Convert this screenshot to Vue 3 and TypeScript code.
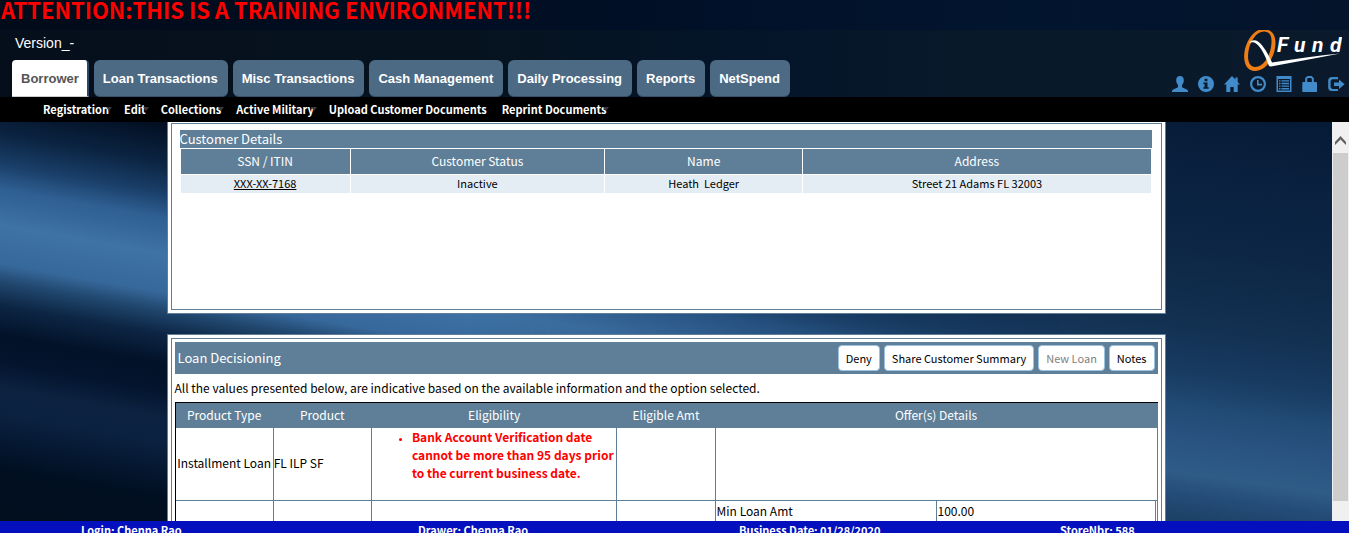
<script setup lang="ts">
interface Tab { label: string; active?: boolean }
interface MenuItem { label: string; arrow: boolean }
interface Action { label: string; disabled?: boolean }

const tabs: Tab[] = [
  { label: 'Borrower', active: true },
  { label: 'Loan Transactions' },
  { label: 'Misc Transactions' },
  { label: 'Cash Management' },
  { label: 'Daily Processing' },
  { label: 'Reports' },
  { label: 'NetSpend' },
]

const menu: MenuItem[] = [
  { label: 'Registration', arrow: true },
  { label: 'Edit', arrow: true },
  { label: 'Collections', arrow: true },
  { label: 'Active Military', arrow: true },
  { label: 'Upload Customer Documents', arrow: false },
  { label: 'Reprint Documents', arrow: true },
]

const actions: Action[] = [
  { label: 'Deny' },
  { label: 'Share Customer Summary' },
  { label: 'New Loan', disabled: true },
  { label: 'Notes' },
]

const icons: { name: string; path: string }[] = [
  { name: 'Profile', path: 'M8 0C5.3 0 4.2 1.8 4.2 4.2c0 2 .8 3.6 1.8 4.8v1.4c0 .8-.6 1.2-1.6 1.6L1.2 13.4C.3 13.800 0 14.500 0 16h16c0-1.500-.3-2.200-1.200-2.600L11.600 12c-1-.4-1.600-.8-1.600-1.600V9c1-1.200 1.800-2.800 1.800-4.800C11.800 1.800 10.700 0 8 0z' },
  { name: 'Information', path: 'M8 0a8 8 0 1 0 0 16A8 8 0 0 0 8 0zM6.600 2.800h2.800v2.400H6.600zM5.300 6.400h4.200v4.800h1.200v1.600H5.300v-1.600h1.200V8H5.300z' },
  { name: 'Home', path: 'M8 0L0 8.600h2.300V16h4v-5h3.400v5h4V8.600H16l-2.300-2.500V1.500h-2.300v2.100z' },
  { name: 'History', path: 'M8 0a8 8 0 1 0 0 16A8 8 0 0 0 8 0zm0 2.200a5.800 5.800 0 1 1 0 11.600A5.800 5.800 0 0 1 8 2.200zM7 4h1.600v3.800H12v1.600H7z' },
  { name: 'Reports list', path: 'M.5 0h15v16H.500zM2 3v11.500h12V3zM3 4.200h1.500v1.400H3zm2.500 0H13v1.400H5.500zM3 6.800h1.500v1.400H3zm2.500 0H13v1.400H5.500zM3 9.400h1.500v1.400H3zm2.500 0H13v1.400H5.500zM3 12h1.500v1.400H3zm2.500 0H13v1.400H5.500z' },
  { name: 'Lock', path: 'M5.500 0h4L11.800 2v4H14.500l.5 1v8.500l-.5.500H.800L.300 15.500V7l.5-1h2.400V2zM6 2L5.200 2.800V6h4.600V2.800L9 2z' },
  { name: 'Log out', path: 'M4 1h6v2.300H4.200L2.600 4.800v6.600l1.600 1.500H10V15H4C1.600 15 .2 13.600.2 11.400V4.800C.2 2.500 1.600 1 4 1zM11 3.400L16.600 8.200 11 13V10H6V6.400h5z' },
]

const customerHeads = ['SSN / ITIN', 'Customer Status', 'Name', 'Address']
const footer = ['Login: Chenna Rao', 'Drawer: Chenna Rao', 'Business Date: 01/28/2020', 'StoreNbr: 588']
</script>

<template>
  <div class="app">
    <header>
      <h1 class="banner">ATTENTION:THIS IS A TRAINING ENVIRONMENT!!!</h1>
      <div class="masthead">
        <div class="left">
          <div class="version">Version_-</div>
          <nav class="tabs">
            <a v-for="t in tabs" :key="t.label" href="#" class="tab" :class="{ active: t.active }">{{ t.label }}</a>
          </nav>
        </div>
        <div class="right">
          <svg class="logo" viewBox="0 0 98 41" role="img" aria-label="QFund">
            <path fill="#ee7d16" fill-rule="evenodd" d="M19 -1C29 -1 33 7 31 18C29 31 20 41 11 41C2 41 -1 31 0.500 22C2 11 10 -1 19 -1ZM20 1.500C12 1.500 6 12 4.500 21C3 30 5 37 11.500 37C19 37 25.500 27 27 17C28.500 8 27 1.500 20 1.500Z" />
            <path fill="#fff" d="M5 13C7 10 11 9.500 14 11.500C20 16 24 24 28 32.500C50 29 74 25.500 96 23.500C74 28 50 32 27 36.500L25 36C21 25 17 17 12 13.500C10 12 7 12 5 13Z" />
            <text x="33 50 68 86" y="22">Fund</text>
          </svg>
          <div class="icons">
            <a v-for="i in icons" :key="i.name" href="#" :aria-label="i.name">
              <svg viewBox="0 0 16 16"><path fill-rule="evenodd" :d="i.path" /></svg>
            </a>
          </div>
        </div>
      </div>
      <nav class="menu">
        <a v-for="m in menu" :key="m.label" href="#" :class="{ arrow: m.arrow }">{{ m.label }}</a>
      </nav>
    </header>

    <main>
      <div class="content">
        <section class="panel first">
          <div class="inner customer">
            <h2 class="strip">Customer Details</h2>
            <table class="customers">
              <colgroup><col class="c1" /><col class="c2" /><col class="c3" /><col class="c4" /></colgroup>
              <thead>
                <tr><th v-for="h in customerHeads" :key="h">{{ h }}</th></tr>
              </thead>
              <tbody>
                <tr>
                  <td><a href="#">XXX-XX-7168</a></td>
                  <td>Inactive</td>
                  <td>Heath&nbsp; Ledger</td>
                  <td>Street 21 Adams FL 32003</td>
                </tr>
              </tbody>
            </table>
          </div>
        </section>

        <section class="panel">
          <div class="inner loan">
            <div class="loan-head">
              <h2>Loan Decisioning</h2>
              <button v-for="a in actions" :key="a.label" type="button" :disabled="a.disabled">{{ a.label }}</button>
            </div>
            <p class="note">All the values presented below, are indicative based on the available information and the option selected.</p>
            <table class="offers">
              <colgroup><col class="o1" /><col class="o1" /><col class="o3" /><col class="o1" /><col class="o5" /><col class="o5" /></colgroup>
              <thead>
                <tr>
                  <th>Product Type</th><th>Product</th><th>Eligibility</th><th>Eligible Amt</th><th colspan="2">Offer(s) Details</th>
                </tr>
              </thead>
              <tbody>
                <tr>
                  <td class="mid">Installment Loan</td>
                  <td>FL ILP SF</td>
                  <td>
                    <ul><li>Bank Account Verification date cannot be more than 95 days prior to the current business date.</li></ul>
                  </td>
                  <td></td>
                  <td colspan="2"></td>
                </tr>
                <tr class="detail">
                  <td></td><td></td><td></td><td></td>
                  <td>Min Loan Amt</td>
                  <td class="amount">100.00</td>
                </tr>
              </tbody>
            </table>
          </div>
        </section>
      </div>

      <div class="scrollbar">
        <button type="button" aria-label="Scroll up">
          <svg viewBox="0 0 11 9"><path d="M0 6L5.500 0L11 6V9L5.500 3.500L0 9Z" fill="#606060" /></svg>
        </button>
        <div class="thumb"></div>
      </div>
    </main>

    <footer>
      <span v-for="f in footer" :key="f">{{ f }}</span>
    </footer>
  </div>
</template>

<style>
html, body { height: 100%; overflow: hidden; }
</style>

<style scoped>
* { box-sizing: border-box; }
h1, h2, p, ul { margin: 0; font-weight: 400; }
a { color: inherit; text-decoration: none; }
button { font-family: inherit; }

.app {
  display: grid;
  grid-template-rows: auto minmax(0, 1fr) auto;
  height: 100vh;
  overflow: hidden;
  font-family: "Noto Sans CJK SC", "Noto Sans", sans-serif;
  font-size: 12px;
  line-height: 18px;
  color: #000;
}

header { background: linear-gradient(90deg, #020b19, #010e24 40%, #02152f 75%, #03142b); }
.banner {
  padding: 0 0 12px 1px;
  font-size: 22px;
  line-height: 18px;
  font-weight: 700;
  color: #f00;
}
.masthead {
  display: flex;
  justify-content: space-between;
  background: linear-gradient(90deg, #050f1b, #06131f 35%, #04152a 56%, #08192a 72%, #0a1a2c);
}
.left { padding: 4px 0 0 12px; font-family: "Liberation Sans", Arial, sans-serif; }
.version { padding-left: 3px; font-size: 14px; color: #fff; }
.tabs { display: flex; gap: 5px; margin-top: 8px; }
.tab {
  padding: 1px 10px 0 9px;
  font-size: 13px;
  line-height: 35px;
  font-weight: 700;
  color: #fff;
  background: #4c6a83;
  border-bottom: 1px solid #34516b;
  border-radius: 6px;
}
.tab.active {
  padding-right: 8px;
  color: #555;
  background: #fff;
  border-right: 2px solid #2c4865;
  border-bottom-color: #ccc;
  border-radius: 4px 4px 0 0;
}
.right { display: flex; flex-direction: column; align-items: flex-end; padding-right: 5px; }
.logo { width: 98px; height: 41px; margin-right: 2px; }
.logo text {
  font: italic 700 21px Roboto, "Liberation Sans", sans-serif;
  fill: #fff;
}
.icons { display: flex; gap: 10px; margin-top: 5px; }
.icons a { display: flex; }
.icons svg { width: 16px; height: 16px; fill: #428bca; overflow: visible; }

.menu {
  display: flex;
  gap: 15px;
  padding: 3px 0 4px 43px;
  background: #000;
  color: #fff;
  font-size: 11px;
  font-weight: 700;
}
.menu a { display: flex; align-items: center; }
.menu .arrow::after {
  content: "";
  width: 0;
  margin: 0 -3px 0 -3px;
  border: 3px solid transparent;
  border-top: 4px solid #3a3a3a;
  border-bottom: 0;
}

main { position: relative; display: flex; min-height: 0; overflow: hidden; }
main::before, main::after { content: ""; position: absolute; inset: 0; }
main::before {
  background: linear-gradient(190deg, #020d1f 204px, #0b2442 246px, #1a3f69 276px, #2f5f93 300px, #3f72a5 336px, #37689b 374px, #21486f 391px, #0d2645 414px, #021228 444px, #03142d 470px, #0c2240 496px, #0b2140 522px, #051831 549px, #010f22 575px, #020f1e 625px);
}
main::after {
  background: linear-gradient(188deg, #051a35 0, #0a2140 80px, #0d2645 146px, #123050 219px, #183b62 271px, #214a74 304px, #28517f 331px, #2e5c87 371px, #254c78 392px, #1d4268 416px);
  -webkit-mask-image: linear-gradient(90deg, transparent 35%, #000 80%);
  mask-image: linear-gradient(90deg, transparent 35%, #000 80%);
}
.content, .scrollbar { position: relative; z-index: 1; }
.content { flex: 1; display: flex; flex-direction: column; align-items: center; gap: 20px; }
.panel {
  flex: none;
  width: 75%;
  padding: 3px;
  background: #fff;
  border: 1px solid #5f7f98;
}
.first { margin-top: -3px; }
.inner { border: 1px solid #5f7f98; }
.customer { min-height: 187px; padding: 6px 9px 0 8px; }
.strip { background: #5f7f98; color: #fff; font-size: 13px; }

table { width: 100%; table-layout: fixed; }
th { height: 25px; padding: 0 0 2px; font-weight: 400; color: #fff; background: #5f7f98; }
.customers { border-spacing: 1px; }
.customers td { padding: 0 0 2px; text-align: center; font-size: 11px; line-height: 16px; background: #e5edf4; }
.customers td a { text-decoration: underline; }
.c1 { width: 17.5%; }
.c2 { width: 26.2%; }
.c3 { width: 20.4%; }
.c4 { width: 35.9%; }

.loan { padding: 3px; }
.loan-head {
  display: flex;
  align-items: center;
  gap: 4px;
  padding: 3px;
  background: #5f7f98;
}
.loan-head h2 { flex: 1; font-size: 13px; color: #fff; }
.loan-head button {
  height: 26px;
  padding: 0 7px;
  font-size: 11px;
  line-height: 22px;
  color: #000;
  background: #fff;
  border: 1px solid #9cc4e2;
  border-radius: 4px;
}
.loan-head button:disabled { color: #808080; }
.note { padding: 5px 0; }
.offers { border-spacing: 0; border-top: 1px solid #000; border-left: 1px solid #000; }
.offers th { border-right: 1px solid #5f7f98; }
.offers td { padding: 0 0 2px; border-right: 1px solid #5f7f98; border-bottom: 1px solid #5f7f98; }
.offers .mid { text-align: center; }
.offers .detail td { height: 23px; padding-left: 1px; }
.offers .detail .amount { box-shadow: inset -1px 0 #fff, inset -2px 0 #5f7f98; }
.o1 { width: 10%; }
.o3 { width: 25%; }
.o5 { width: 22.5%; }
ul { padding-left: 40px; margin-bottom: 16px; font-weight: 700; color: #f00; }
li { font-weight: 700; }
li::marker { font-size: 9px; }

.scrollbar { width: 17px; display: flex; flex-direction: column; padding: 0 1px 20px; background: #f0f0f0; }
.scrollbar button { display: flex; justify-content: center; align-items: center; height: 31px; padding: 5px 0 0; border: 0; background: none; }
.scrollbar svg { width: 11px; height: 9px; }
.thumb { flex: 1; background: #cdcdcd; }

footer {
  position: relative;
  display: grid;
  grid-template-columns: 337fr 321fr 321fr 289fr;
  height: 12px;
  padding-left: 6%;
  overflow: hidden;
  background: #0410bd;
  color: #fff;
  font-size: 11px;
  font-weight: 700;
}
</style>
